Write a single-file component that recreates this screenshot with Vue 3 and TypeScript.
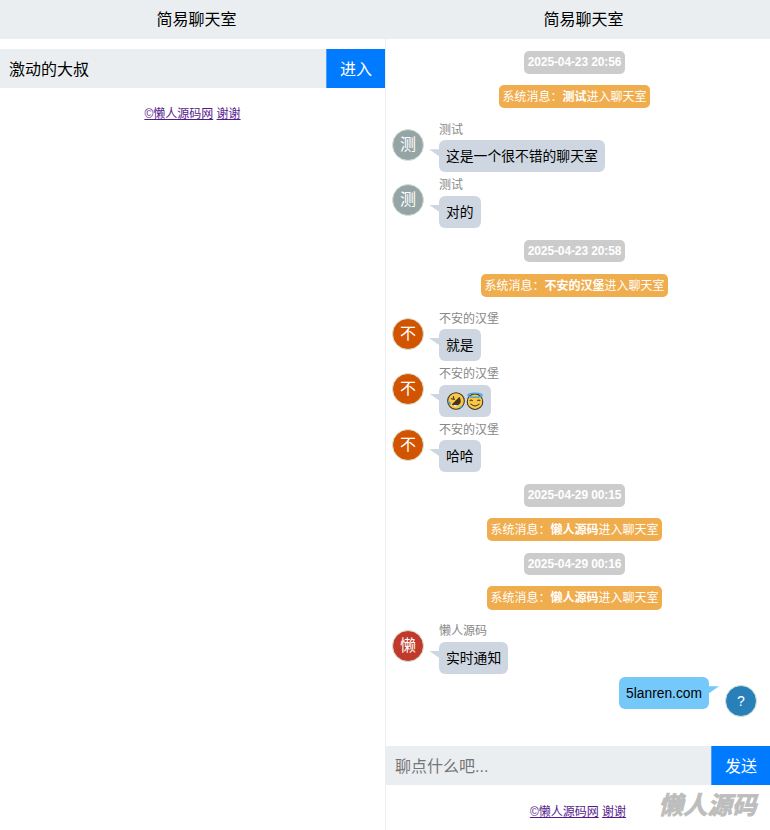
<script setup lang="ts">
type Item =
  | { kind: 'time'; text: string }
  | { kind: 'sys'; who: string }
  | { kind: 'msg'; who: string; text?: string; color: string; emoji?: boolean }

const items: Item[] = [
  { kind: 'time', text: '2025-04-23 20:56' },
  { kind: 'sys', who: '测试' },
  { kind: 'msg', who: '测试', text: '这是一个很不错的聊天室', color: '#95a5a6' },
  { kind: 'msg', who: '测试', text: '对的', color: '#95a5a6' },
  { kind: 'time', text: '2025-04-23 20:58' },
  { kind: 'sys', who: '不安的汉堡' },
  { kind: 'msg', who: '不安的汉堡', text: '就是', color: '#d35400' },
  { kind: 'msg', who: '不安的汉堡', emoji: true, color: '#d35400' },
  { kind: 'msg', who: '不安的汉堡', text: '哈哈', color: '#d35400' },
  { kind: 'time', text: '2025-04-29 00:15' },
  { kind: 'sys', who: '懒人源码' },
  { kind: 'time', text: '2025-04-29 00:16' },
  { kind: 'sys', who: '懒人源码' },
  { kind: 'msg', who: '懒人源码', text: '实时通知', color: '#c0392b' }
]
const sysLabel = '系统消息\uFF1A'
</script>

<template>
  <div class="page">
    <section class="col left">
      <header class="head">简易聊天室</header>
      <div class="bar enter">
        <div class="field filled">激动的大叔</div>
        <div class="btn">进入</div>
      </div>
      <p class="foot"><a href="#">©懒人源码网</a> <a href="#">谢谢</a></p>
    </section>
    <section class="col right">
      <header class="head">简易聊天室</header>
      <div class="list">
        <template v-for="(it, i) in items" :key="i">
          <div v-if="it.kind === 'time'" class="center"><span class="time">{{ it.text }}</span></div>
          <div v-else-if="it.kind === 'sys'" class="center">
            <span class="sys">{{ sysLabel }}<b>{{ it.who }}</b>进入聊天室</span>
          </div>
          <div v-else class="msg">
            <div class="avatar" :style="{ background: it.color }">{{ it.who[0] }}</div>
            <div class="body">
              <div class="name">{{ it.who }}</div>
              <div class="bubble">
                <template v-if="it.text">{{ it.text }}</template>
                <span v-else class="emojis">
                  <svg width="18" height="18" viewBox="0 0 19 19">
                    <circle cx="9.5" cy="9.5" r="8.8" fill="#f9c846" stroke="#3a3222" stroke-width="1.1" />
                    <path d="M5 13.2 13.2 5 Q16.4 10.8 12 13.6 Q8.2 16 5 13.2Z" fill="#4a3420" />
                    <path d="M6.2 13.6 12 14 8.6 15.4Z" fill="#fff" />
                    <path d="M4.2 7 7.6 7.8 6.6 4.4M10.6 12.8 9.8 9.6 13.4 10.4" fill="none" stroke="#3a3222" stroke-width="1.1" />
                    <path d="M1.8 9.5Q1 13.2 3.8 13.2 5 11.8 1.8 9.5ZM12.8 16.6Q16.6 17.6 16.4 14.6 15 13.8 12.8 16.6Z" fill="#2fa8e6" />
                  </svg>
                  <svg width="18" height="18" viewBox="0 0 19 19">
                    <circle cx="9.5" cy="10.2" r="8.2" fill="#f9c846" stroke="#3a3222" stroke-width="1.1" />
                    <ellipse cx="9.5" cy="3.4" rx="7.4" ry="2.2" fill="none" stroke="#49a6dc" stroke-width="1.6" />
                    <path d="M4 9.4Q5.5 7.6 7 9.4M12 9.4Q13.5 7.6 15 9.4" fill="none" stroke="#3a3222" stroke-width="1.1" />
                    <path d="M4.8 12.4Q9.5 17.2 14.2 12.4" fill="none" stroke="#3a3222" stroke-width="1.1" />
                  </svg>
                </span>
              </div>
            </div>
          </div>
        </template>
        <div class="msg self">
          <div class="bubble">5lanren.com</div>
          <div class="avatar self-avatar">?</div>
        </div>
      </div>
      <div class="bar">
        <div class="field">聊点什么吧...</div>
        <div class="btn">发送</div>
      </div>
      <p class="foot"><a href="#">©懒人源码网</a> <a href="#">谢谢</a></p>
      <div class="mark">懒人源码</div>
    </section>
  </div>
</template>

<style>
body {
  background: #fff;
}
</style>

<style scoped>
.page {
  display: flex;
  width: 770px;
  height: 830px;
  overflow: hidden;
  font-family: "Liberation Sans", "Noto Sans CJK SC", sans-serif;
  color: #000;
}
.col {
  width: 385px;
  position: relative;
  display: flex;
  flex-direction: column;
}
.right {
  border-left: 1px solid #ebeef1;
  box-sizing: border-box;
}
.head {
  height: 39px;
  line-height: 39px;
  background: #ebeef1;
  text-align: center;
  font-size: 16px;
  padding-left: 8px;
}
.right .head {
  margin-left: -1px;
  padding-left: 12px;
}
.bar {
  display: flex;
  height: 39.5px;
}
.right .bar {
  margin-left: -1px;
}
.enter {
  margin-top: 9.5px;
}
.field {
  flex: 1;
  background: #ebeef1;
  font-size: 16px;
  line-height: 42px;
  padding-left: 9px;
  color: #757575;
}
.right .field {
  padding-left: 10px;
}
.field.filled {
  color: #000;
}
.btn {
  width: 59px;
  background: #007bff;
  color: #fff;
  font-size: 16px;
  line-height: 42px;
  text-align: center;
  border-left: 1px solid #4a9dfa;
  box-sizing: border-box;
}
.foot {
  margin: 16.5px 0 0;
  font-size: 12px;
  line-height: 18px;
  text-align: center;
}
.right .foot {
  margin-top: 18px;
}
.foot a {
  color: #551a8b;
}
.list {
  height: 706.5px;
  padding-right: 7px;
  display: flex;
  flex-direction: column;
  overflow: hidden;
}
.center {
  display: flex;
  justify-content: center;
  margin: 11.25px 0 0;
}
.center:first-child {
  margin-top: 12px;
}
.time {
  height: 22.5px;
  line-height: 22px;
  padding: 0 4px;
  background: #ccc;
  color: #fff;
  font-size: 12px;
  font-weight: 700;
  letter-spacing: -0.12px;
  border-radius: 5px;
}
.sys {
  height: 23.5px;
  line-height: 24px;
  padding: 0 3.5px;
  background: #f0ad4e;
  color: #fff;
  font-size: 12px;
  border-radius: 5px;
}
.msg {
  display: flex;
  padding: 0 0 0 6px;
  margin-top: 5px;
}
.center + .msg {
  margin-top: 13.5px;
}
.msg + .center {
  margin-top: 12px;
}
.avatar {
  flex: none;
  width: 32px;
  height: 32px;
  margin-top: 7px;
  border: 1px solid #d5e5d5;
  box-sizing: border-box;
  border-radius: 50%;
  color: #fff;
  font-size: 16px;
  line-height: 30px;
  text-align: center;
}
.body {
  margin-left: 15px;
}
.name {
  height: 18.5px;
  line-height: 17px;
  font-size: 12px;
  color: #888;
}
.bubble {
  position: relative;
  display: inline-block;
  vertical-align: top;
  height: 32px;
  line-height: 33px;
  padding: 0 7px;
  box-sizing: border-box;
  background: #ced7e1;
  border-radius: 6px;
  font-size: 13.8px;
}
.bubble::before {
  content: "";
  position: absolute;
  left: -10px;
  top: 9px;
  width: 10px;
  height: 7px;
  background: #ced7e1;
  clip-path: polygon(0 0, 100% 0, 100% 100%);
}
.emojis {
  display: flex;
  gap: 1px;
  height: 100%;
  padding: 0 0.5px;
  align-items: center;
}
.self {
  justify-content: flex-end;
  padding: 0 6px 0 0;
  margin-top: 3.5px;
}
.self .bubble {
  background: #75c9fa;
  margin-right: 16px;
}
.self .bubble::before {
  left: auto;
  right: -10px;
  top: 9px;
  background: #75c9fa;
  clip-path: polygon(0 0, 100% 0, 0 100%);
}
.self-avatar {
  background: #2980b9;
  margin-top: 8px;
  font-size: 14px;
}
.mark {
  position: absolute;
  left: 272.5px;
  top: 790px;
  font-size: 24.5px;
  font-weight: 700;
  font-style: italic;
  color: #bdbdbd;
  line-height: 32px;
  -webkit-text-stroke: 0.8px #bdbdbd;
}
</style>
